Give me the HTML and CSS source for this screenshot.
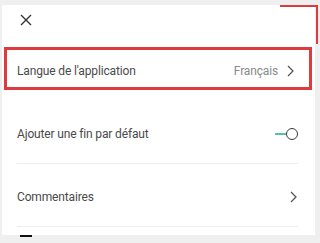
FILE: index.html
```html
<!DOCTYPE html>
<html lang="fr">
<head>
    <meta charset="UTF-8">
    <meta name="viewport" content="width=device-width, initial-scale=1.0">
    <title>Paramètres</title>
    <link rel="stylesheet" href="styles.css">
</head>
<body>
    <div class="card">
        <div class="header">
            <svg class="close" width="12" height="12" viewBox="0 0 12 12">
                <path d="M1 1 L11 11 M11 1 L1 11" stroke="#333" stroke-width="1.4" fill="none"/>
            </svg>
        </div>

        <div class="row row-marked">
            <span class="label">Langue de l'application</span>
            <span class="value">Français</span>
            <svg class="chevron" width="7" height="12" viewBox="0 0 7 12">
                <path d="M1 1 L6 6 L1 11" stroke="#555" stroke-width="1.3" fill="none"/>
            </svg>
        </div>

        <div class="row line">
            <span class="label">Ajouter une fin par défaut</span>
            <span class="toggle">
                <span class="toggle-track"></span>
                <span class="toggle-knob"></span>
            </span>
        </div>

        <div class="row line">
            <span class="label">Commentaires</span>
            <svg class="chevron" width="7" height="12" viewBox="0 0 7 12">
                <path d="M1 1 L6 6 L1 11" stroke="#555" stroke-width="1.3" fill="none"/>
            </svg>
        </div>
    </div>
    <div class="dash"></div>

    <div class="mark-corner"></div>
</body>
</html>
```

FILE: styles.css
```css
body {
    margin: 0;
    background-color: #efefef;
    font-family: Roboto, "Noto Sans", sans-serif;
    color: #4a4a4a;
    padding-top: 5px;
}

.card {
    margin-left: 2px;
    width: 313px;
    height: 230px;
    background: #fff;
    overflow: hidden;
}

.header {
    height: 42px;
    box-sizing: border-box;
    padding: 9px 0 0 18px;
}

.close {
    display: block;
}

.row {
    display: flex;
    align-items: center;
    margin: 0 17px 0 15px;
    height: 63px;
    padding-top: 3px;
    box-sizing: border-box;
    font-size: 12px;
    letter-spacing: -0.15px;
}

.line {
    border-bottom: 1px solid #eeeeee;
}

.row-marked {
    margin: 0 0 11px 2px;
    width: 308px;
    height: 43px;
    border: 3px solid #dd3b3d;
    padding: 4px 14px 0 10px;
}

.label {
    flex: 1;
}

.value {
    color: #8a8a8a;
    margin-right: 9px;
}

.chevron {
    display: block;
    margin-right: 1px;
}

.toggle {
    display: flex;
    align-items: center;
    margin-right: 0;
}

.toggle-track {
    width: 11px;
    height: 2px;
    background: #5bbfa8;
}

.toggle-knob {
    width: 12px;
    height: 12px;
    box-sizing: border-box;
    border: 1.5px solid #3a3a3a;
    border-radius: 50%;
}

.dash {
    margin-left: 20px;
    width: 12px;
    height: 2px;
    background: #111;
}

.mark-corner {
    position: absolute;
    top: 5px;
    left: 280px;
    width: 36px;
    height: 37px;
    border-top: 2px solid #dd3b3d;
    border-right: 2px solid #dd3b3d;
}
```
